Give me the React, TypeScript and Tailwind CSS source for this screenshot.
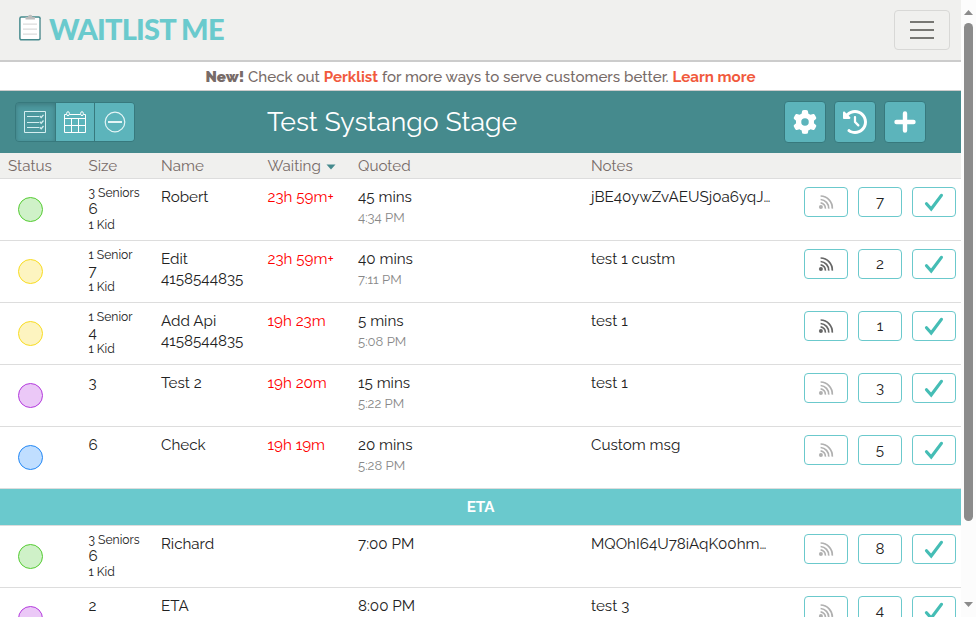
import { FaGear, FaClockRotateLeft } from 'react-icons/fa6'

type Row = {
  status: 'green' | 'yellow' | 'purple' | 'blue'
  size: string
  seniors?: string
  kids?: string
  name: string
  phone?: string
  waiting?: string
  quoted: string
  due?: string
  notes: string
  count: string
  active?: boolean
}

const statusColors = {
  green: 'border-[#55cc33] bg-[#cff1c8]',
  yellow: 'border-[#f8dc22] bg-[#fdf4c0]',
  purple: 'border-[#b43bdd] bg-[#ebc8f7]',
  blue: 'border-[#2388f5] bg-[#c0deff]',
}

const waitingRows: Row[] = [
  { status: 'green', seniors: '3 Seniors', size: '6', kids: '1 Kid', name: 'Robert', waiting: '23h 59m+', quoted: '45 mins', due: '4:34 PM', notes: 'jBE40ywZvAEUSj0a6yqJ…', count: '7' },
  { status: 'yellow', seniors: '1 Senior', size: '7', kids: '1 Kid', name: 'Edit', phone: '4158544835', waiting: '23h 59m+', quoted: '40 mins', due: '7:11 PM', notes: 'test 1 custm', count: '2', active: true },
  { status: 'yellow', seniors: '1 Senior', size: '4', kids: '1 Kid', name: 'Add Api', phone: '4158544835', waiting: '19h 23m', quoted: '5 mins', due: '5:08 PM', notes: 'test 1', count: '1', active: true },
  { status: 'purple', size: '3', name: 'Test 2', waiting: '19h 20m', quoted: '15 mins', due: '5:22 PM', notes: 'test 1', count: '3' },
  { status: 'blue', size: '6', name: 'Check', waiting: '19h 19m', quoted: '20 mins', due: '5:28 PM', notes: 'Custom msg', count: '5' },
]

const etaRows: Row[] = [
  { status: 'green', seniors: '3 Seniors', size: '6', kids: '1 Kid', name: 'Richard', quoted: '7:00 PM', notes: 'MQOhI64U78iAqK00hm…', count: '8' },
  { status: 'purple', size: '2', name: 'ETA', quoted: '8:00 PM', notes: 'test 3', count: '4' },
]

function SignalIcon({ active }: { active?: boolean }) {
  return (
    <svg width="16" height="16" viewBox="0 0 16 16" fill="none" strokeWidth="1.7" className={active ? 'text-[#666]' : 'text-[#b0b0b0]'} stroke="currentColor">
      <circle cx="2.9" cy="13" r="2" fill="currentColor" stroke="none" />
      <path d="M2.6 8.8a5.4 5.4 0 0 1 4.8 5.8M2.6 5.5a8.6 8.6 0 0 1 8.1 9.1M2.6 2a12 12 0 0 1 11.7 12.6" />
    </svg>
  )
}

function CheckIcon() {
  return (
    <svg width="20" height="20" viewBox="0 0 20 20" fill="none" stroke="#45bdb5" strokeWidth="3.2" className="mt-px">
      <path d="M2.5 10.8 7.2 16 17.4 2.4" strokeLinecap="round" strokeLinejoin="miter" />
    </svg>
  )
}

function ListIcon() {
  return (
    <svg width="22" height="22" viewBox="0 0 22 22" fill="none" stroke="#d5eef0" strokeWidth="1">
      <path d="M.5.5h21v21H.5z" />
      <path d="M3 5.5h12M3 11.5h12M3 16.5h12" strokeWidth="1.2" />
      <path d="m15.700 5 1.500 1.500 2.300-2.700M15.700 10.700l1.500 1.500 2.300-2.700M15.700 16.200l1.500 1.500 2.300-2.700" strokeWidth="1.3" />
    </svg>
  )
}

function CalendarIcon() {
  return (
    <svg width="22" height="22" viewBox="0 0 22 22" fill="none" stroke="#fff" strokeWidth="1">
      <path d="M2.500 3.500h-2v18h21v-18h-2M5.500 3.500h11M.5 7.500h21M.5 14.500h21M7.500 7.500v14M14.500 7.500v14" />
      <ellipse cx="4" cy="2.700" rx="1.400" ry="2" />
      <ellipse cx="18" cy="2.700" rx="1.400" ry="2" />
    </svg>
  )
}

function MinusIcon() {
  return (
    <svg width="22" height="22" viewBox="0 0 22 22" fill="none" stroke="#e4f5f6" strokeWidth="1.2">
      <circle cx="11" cy="11" r="9.800" />
      <path d="M4 11h14" strokeWidth="1.8" />
    </svg>
  )
}

function PlusIcon() {
  return (
    <svg width="22" height="22" viewBox="0 0 22 22" stroke="#fff" strokeWidth="4.400" strokeLinecap="round">
      <path d="M11 2.500v17M2.500 11h17" />
    </svg>
  )
}

function Logo() {
  return (
    <div className="flex items-start">
      <svg width="22" height="27" viewBox="0 0 22 27" fill="none">
        <rect x=".9" y="3" width="20.200" height="22.800" rx="1.500" fill="#fff" stroke="#468a8d" strokeWidth="1.500" />
        <path d="M21.200 5v19" stroke="#8fb0b1" />
        <path d="M6.500 3h2.500a2.200 2.200 0 0 1 4.400 0h2.500v2.500H6.500z" fill="#bdbdbd" />
        <path d="M4 10.200h14M4 15.200h14M4 20.200h14" stroke="#dcdcdc" strokeWidth="1.200" />
      </svg>
      <span className="ml-2 font-[Lato] text-[29px] leading-[30px] font-black tracking-[-0.8px] whitespace-nowrap text-[#6acacd]">WAITLIST ME</span>
    </div>
  )
}

const actionButton = 'flex h-[30px] w-11 items-center justify-center rounded-[4px] border border-[#6bc9cc] bg-white'
const toolButton = 'flex size-[42px] items-center justify-center rounded-[4px] border border-[#37797d] bg-[#5cb4bb] text-white'
const columns = 'grid grid-cols-[80.5px_72.5px_106.5px_90.5px_233px_213px_1fr] pl-2'

function WaitRow({ row }: { row: Row }) {
  return (
    <div className={`${columns} h-[62px] border-b border-[#ddd] text-[15.2px] leading-[21px] text-[#222]`}>
      <div className="pt-[18px] pl-[10px]">
        <div className={`size-[25px] rounded-full border ${statusColors[row.status]}`} />
      </div>
      <div className={row.seniors ? 'pt-[6px] leading-4' : 'pt-2'}>
        {row.seniors && <div className="text-[12.16px]">{row.seniors}</div>}
        <div>{row.size}</div>
        {row.kids && <div className="text-[12.16px]">{row.kids}</div>}
      </div>
      <div className="pt-2">
        <div>{row.name}</div>
        <div className="-mt-px">{row.phone}</div>
      </div>
      <div className="pt-2 text-[#f00]">{row.waiting}</div>
      <div className="pt-2">
        <div>{row.quoted}</div>
        <div className="-mt-px text-[13.1px] text-[#888]">{row.due}</div>
      </div>
      <div className="pt-2 whitespace-nowrap">{row.notes}</div>
      <div className="flex gap-[10px] pt-2">
        <div className={actionButton}><SignalIcon active={row.active} /></div>
        <div className={actionButton}>{row.count}</div>
        <div className={actionButton}><CheckIcon /></div>
      </div>
    </div>
  )
}

export default function App() {
  return (
    <div className="flex h-[617px] w-[976px] overflow-hidden bg-white font-[Raleway,Lato,sans-serif]">
      <main className="w-[961px] shrink-0">
        <header className="flex h-[62px] items-start justify-between border-b-2 border-[#ccc] bg-[#f0f0ee] pr-[11px] pl-[19px]">
          <div className="pt-[14px]"><Logo /></div>
          <button className="mt-[10px] flex h-10 w-14 flex-col items-center justify-center gap-[6px] rounded-[4px] border border-[#d8d8d6]">
            <span className="h-0.5 w-6 bg-[#777773]" />
            <span className="h-0.5 w-6 bg-[#777773]" />
            <span className="h-0.5 w-6 bg-[#777773]" />
          </button>
        </header>
        <div className="h-[29px] border-b border-[#ccc] text-center text-[15.1px] leading-[30px] font-medium text-[#776b68]">
          <b className="font-black">New!</b> Check out <b className="text-[#f15a3d]">Perklist</b> for more ways to serve customers better. <b className="text-[#f15a3d]">Learn more</b>
        </div>
        <div className="flex h-[62px] items-start bg-[#458a8d] pl-[15px]">
          <div className="mt-[11px] flex h-10 w-[120px] overflow-hidden rounded-[4px] border border-[#37797d]">
            <div className="flex w-10 items-center justify-center border-r border-[#37797d] bg-[#4d999f] shadow-[inset_0_2px_5px_rgba(0,0,0,0.2)]"><ListIcon /></div>
            <div className="flex w-10 items-center justify-center border-r border-[#37797d] bg-[#5cb4bb]"><CalendarIcon /></div>
            <div className="flex w-[39px] items-center justify-center bg-[#5cb4bb]"><MinusIcon /></div>
          </div>
          <h1 className="ml-[132px] w-[517px] pt-[11px] text-[26.7px] leading-10 whitespace-nowrap text-white">Test Systango Stage</h1>
          <div className="mt-[10px] flex gap-2">
            <div className={toolButton}><FaGear size={24} /></div>
            <div className={toolButton}><FaClockRotateLeft size={24} /></div>
            <div className={toolButton}><PlusIcon /></div>
          </div>
        </div>
        <div className={`${columns} h-[26px] border-b border-[#ddd] bg-[#f0f0ee] text-[15.2px] leading-[27px] text-[#776b68]`}>
          <div>Status</div>
          <div>Size</div>
          <div>Name</div>
          <div className="flex items-center gap-[5px]">
            Waiting
            <svg width="10" height="6" viewBox="0 0 10 6" fill="#458a8d"><path d="M.5.5h9L5 5.500z" /></svg>
          </div>
          <div>Quoted</div>
          <div>Notes</div>
        </div>
        {waitingRows.map((row) => <WaitRow key={row.name} row={row} />)}
        <div className="h-[37px] border-b border-[#ddd] bg-[#6ac9cd] text-center text-[15.2px] leading-[36px] font-bold text-white">ETA</div>
        {etaRows.map((row) => <WaitRow key={row.name} row={row} />)}
      </main>
      <aside className="flex w-[15px] shrink-0 flex-col items-center bg-[#fcfcfc]">
        <svg width="9" height="5" viewBox="0 0 9 5" fill="#8b8b8b" className="mt-[10px]"><path d="M0 5h9L4.500 0z" /></svg>
        <div className="mt-2 h-[498px] w-[9px] rounded-full bg-[#8b8b8b]" />
        <svg width="9" height="5" viewBox="0 0 9 5" fill="#8b8b8b" className="mt-[81px]"><path d="M0 0h9L4.500 5z" /></svg>
      </aside>
    </div>
  )
}
